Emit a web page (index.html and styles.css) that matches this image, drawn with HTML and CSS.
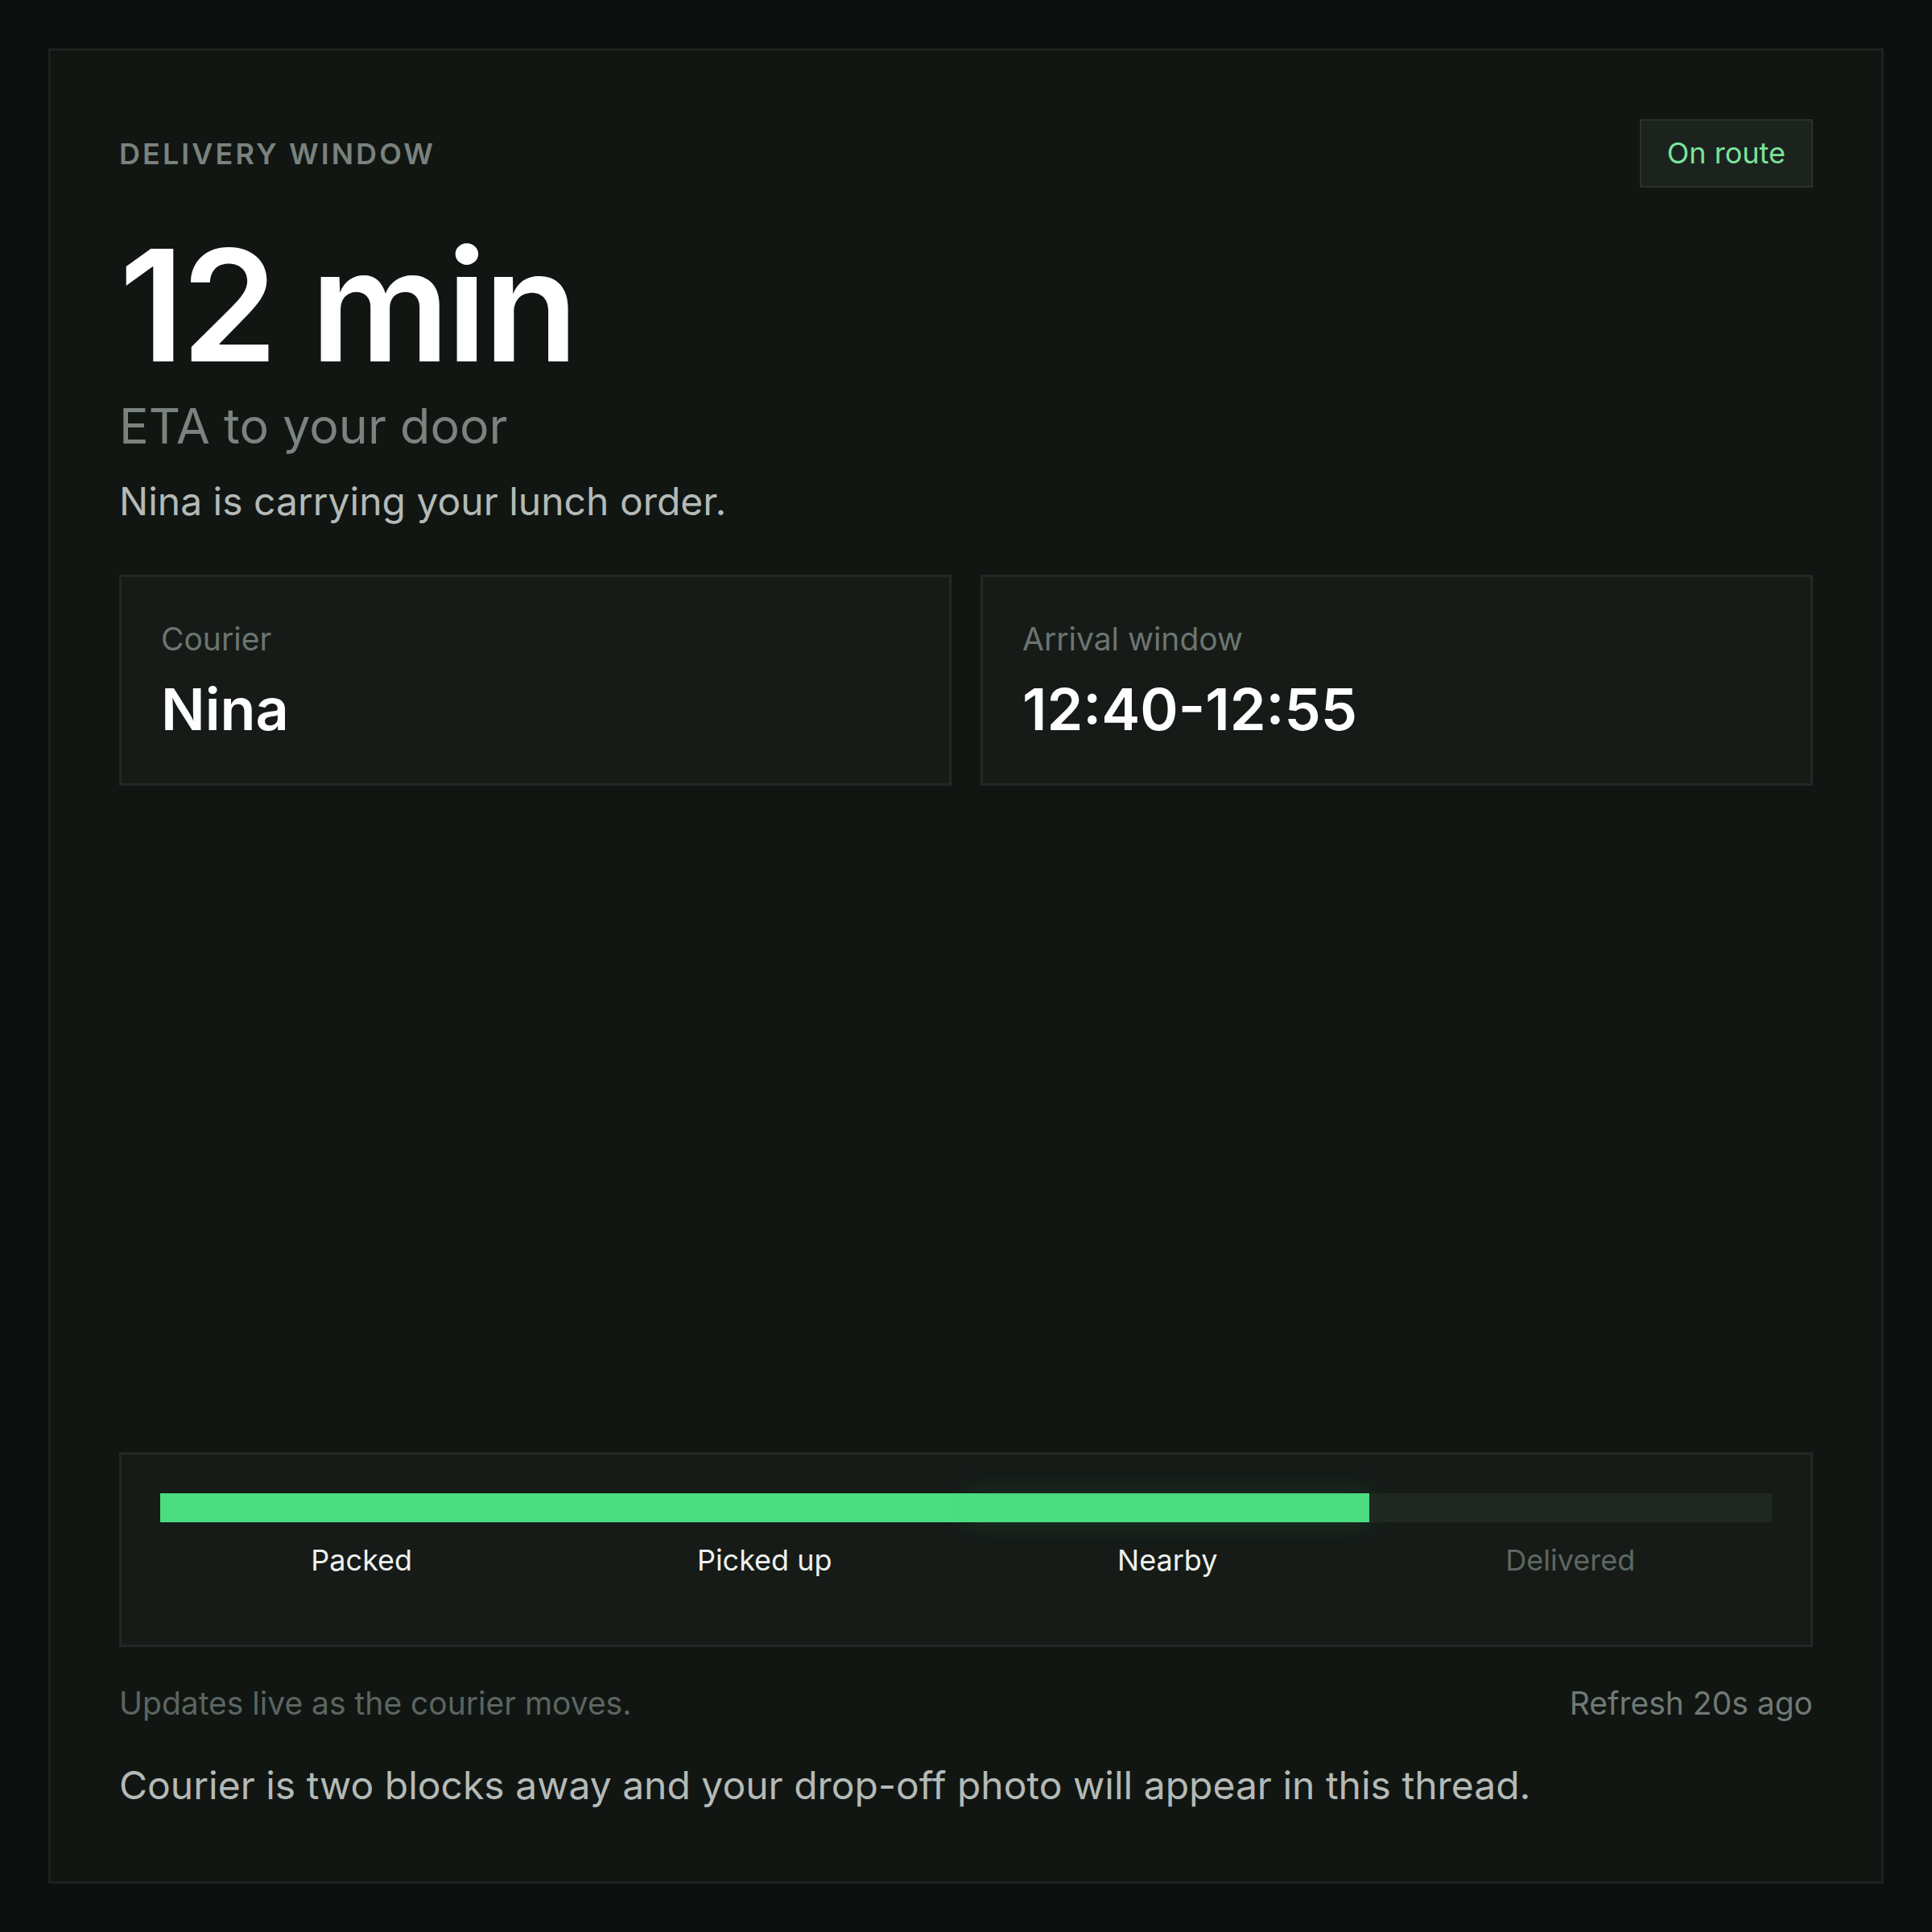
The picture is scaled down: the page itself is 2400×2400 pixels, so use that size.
FILE: index.html
```html
<!DOCTYPE html>
<html>

<head>
  <meta charset="utf-8">
  <title>Delivery window</title>
  <link rel="stylesheet" href="styles.css">
</head>

<body>
  <main class="card">
    <header class="card-head">
      <span class="eyebrow">Delivery window</span>
      <span class="badge">On route</span>
    </header>

    <div class="eta">
      <h1 class="eta-value">12 min</h1>
      <p class="eta-label">ETA to your door</p>
      <p class="eta-note">Nina is carrying your lunch order.</p>
    </div>

    <div class="metrics">
      <div class="metric">
        <span class="metric-label">Courier</span>
        <strong class="metric-value">Nina</strong>
      </div>
      <div class="metric">
        <span class="metric-label">Arrival window</span>
        <strong class="metric-value">12:40-12:55</strong>
      </div>
    </div>

    <section class="progress">
      <div class="track">
        <span class="seg done"></span>
        <span class="seg done"></span>
        <span class="seg done current"></span>
        <span class="seg"></span>
      </div>
      <ol class="steps">
        <li class="step done">Packed</li>
        <li class="step done">Picked up</li>
        <li class="step done">Nearby</li>
        <li class="step">Delivered</li>
      </ol>
    </section>

    <div class="meta">
      <span>Updates live as the courier moves.</span>
      <span class="meta-refresh">Refresh 20s ago</span>
    </div>
    <p class="summary">Courier is two blocks away and your drop-off photo will appear in this thread.</p>
  </main>
</body>

</html>
```

FILE: styles.css
```css
* {
  margin: 0;
  padding: 0;
  box-sizing: border-box;
}

body {
  padding: 60px;
  min-height: 100vh;
  background-color: #0b100e;
  font-family: Inter, "Noto Sans", sans-serif;
  color: #e9ede9;
}

.card {
  display: flex;
  flex-direction: column;
  min-height: calc(100vh - 120px);
  padding: 85px 85px 90px;
  border: 3px solid #1c231f;
  background-color: #111613;
}

.card-head {
  display: flex;
  justify-content: space-between;
  align-items: center;
}

.eyebrow {
  font-size: 36px;
  font-weight: 600;
  letter-spacing: 0.085em;
  text-transform: uppercase;
  color: #79827d;
}

.badge {
  padding: 19px 32px;
  font-size: 36px;
  line-height: 1.2;
  color: #7be39c;
  border: 2px solid #2a322c;
  background-color: #1c231e;
}

.eta {
  margin-top: 50px;
}

.eta-value {
  font-size: 192px;
  font-weight: 600;
  line-height: 1;
  letter-spacing: -0.02em;
  color: #ffffff;
}

.eta-label {
  margin-top: 18px;
  font-size: 61px;
  line-height: 1.2;
  color: #7b837e;
}

.eta-note {
  margin-top: 28px;
  font-size: 48px;
  line-height: 1.2;
  color: #b4bab6;
}

.metrics {
  display: grid;
  grid-template-columns: 1fr 1fr;
  gap: 36px;
  margin-top: 62px;
}

.metric {
  display: flex;
  flex-direction: column;
  gap: 20px;
  padding: 54px 49px 49px;
  border: 3px solid #222925;
  background-color: #161b18;
}

.metric-label {
  font-size: 39px;
  line-height: 1.2;
  color: #6c7570;
}

.metric-value {
  font-size: 72px;
  font-weight: 600;
  line-height: 1.2;
  color: #ffffff;
}

.progress {
  margin-top: auto;
  padding: 48px 48px 82px;
  border: 3px solid #222925;
  background-color: #161b18;
}

.track {
  display: flex;
  height: 36px;
}

.seg {
  flex: 1;
  background-color: #202822;
}

.seg.done {
  background-color: #4ade80;
}

/* soft halo on the leg the courier is on */
.seg.current {
  box-shadow: 0 0 34px rgba(74, 222, 128, 0.14);
}

.steps {
  display: flex;
  margin-top: 26px;
  list-style: none;
}

.step {
  flex: 1;
  text-align: center;
  font-size: 36px;
  line-height: 1.2;
  color: #5e6762;
}

.step.done {
  color: #eef1ee;
}

.meta {
  display: flex;
  justify-content: space-between;
  margin-top: 47px;
  font-size: 39px;
  line-height: 1.2;
  color: #5c6560;
}

.meta-refresh {
  color: #707974;
}

.summary {
  margin-top: 50px;
  font-size: 48px;
  line-height: 1.2;
  color: #b5bab6;
}
```
